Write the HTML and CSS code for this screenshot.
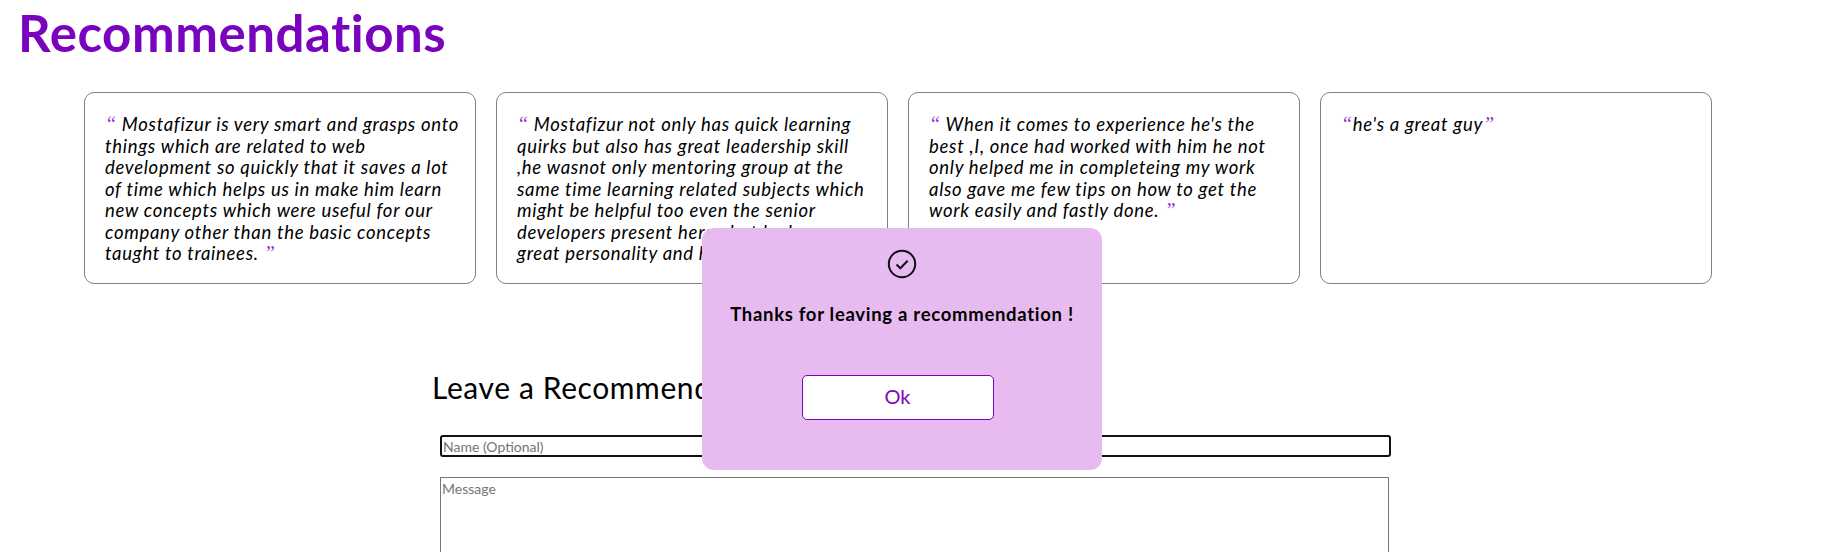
FILE: index.html
```html
<!DOCTYPE html>
<html lang="en">
<head>
<meta charset="utf-8">
<title>Recommendations</title>
<link rel="stylesheet" href="styles.css">
</head>
<body>
<section class="recs">
  <h1 class="title">Recommendations</h1>
  <div class="cards">
    <article class="card"><p class="quote"><span class="q">“</span> Mostafizur is very smart and grasps onto<br>things which are related to web<br>development so quickly that it saves a lot<br>of time which helps us in make him learn<br>new concepts which were useful for our<br>company other than the basic concepts<br>taught to trainees. <span class="q">”</span></p></article>
    <article class="card"><p class="quote"><span class="q">“</span> Mostafizur not only has quick learning<br>quirks but also has great leadership skill<br>,he wasnot only mentoring group at the<br>same time learning related subjects which<br>might be helpful too even the senior<br>developers present here ..but he has a<br>great personality and humble too. <span class="q">”</span></p></article>
    <article class="card"><p class="quote"><span class="q">“</span> When it comes to experience he's the<br>best ,I, once had worked with him he not<br>only helped me in completeing my work<br>also gave me few tips on how to get the<br>work easily and fastly done. <span class="q">”</span></p></article>
    <article class="card"><p class="quote"><span class="q">“</span>he's a great guy<span class="q">”</span></p></article>
  </div>
  <div class="form">
    <h2 class="form-title">Leave a Recommendation</h2>
    <input class="name" type="text" placeholder="Name (Optional)">
    <textarea class="message" placeholder="Message"></textarea>
  </div>
</section>
<div class="modal">
  <svg class="icon" width="30" height="30" viewBox="0 0 30 30" fill="none" stroke="#111" aria-hidden="true"><circle cx="15" cy="15" r="13.2" stroke-width="2"/><path d="M9.5 15.5l3.8 3.8 7.4-7.6" stroke-width="2"/></svg>
  <p class="modal-text">Thanks for leaving a recommendation !</p>
  <button class="ok" type="button">Ok</button>
</div>
</body>
</html>
```
FILE: styles.css
```css
html, body { margin: 0; padding: 0; height: 552px; overflow: hidden; background: #fff; }
body { font-family: Lato, "Open Sans", sans-serif; color: #000; position: relative; }
.recs { display: flex; flex-direction: column; height: 552px; overflow: hidden; }
.title { margin: 0; padding: 0 0 0 18px; font-size: 51px; line-height: 66px; font-weight: 700; color: #7a04bd; letter-spacing: 0.55px; }
.cards { display: flex; gap: 20px; margin: 26px 0 0 84px; }
.card { box-sizing: border-box; width: 392px; height: 192px; border: 1px solid #808080; border-radius: 10px; padding: 21px 20px; flex: none; }
.quote { margin: 0; font-size: 18.5px; line-height: 21.5px; font-style: italic; white-space: nowrap; letter-spacing: 0.7px; }
.q { color: #8e2fd0; font-family: "Liberation Serif", serif; font-size: 20px; font-weight: 400; line-height: 1; }
.form { margin: 86px 0 0 432px; display: flex; flex-direction: column; align-items: flex-start; flex: none; }
.form-title { margin: 0; font-size: 30px; line-height: 34px; font-weight: 400; letter-spacing: 0.6px; }
.name { box-sizing: border-box; width: 951px; height: 22px; margin: 31px 0 0 8px; padding: 0 1px; border: 2px solid #111; border-radius: 3px; font: 14px Lato, sans-serif; outline: none; }
.message { box-sizing: border-box; width: 949px; height: 200px; margin: 20px 0 0 8px; padding: 2px 1px; border: 1px solid #767676; border-radius: 0; font: 14px Lato, sans-serif; resize: none; outline: none; flex: none; }
.modal { position: absolute; left: 702px; top: 228px; width: 400px; height: 242px; box-sizing: border-box; background: #e8bbf0; border-radius: 12px; display: flex; flex-direction: column; align-items: center; padding-top: 21px; }
.icon { display: block; }
.modal-text { margin: 24px 0 0; font-size: 18.5px; line-height: 22px; font-weight: 700; color: #000; white-space: nowrap; letter-spacing: 0.7px; }
.ok { box-sizing: border-box; width: 192px; height: 45px; margin: 50px 9px 0 0; padding-bottom: 4px; background: #fff; border: 1px solid #7a04bd; border-radius: 5px; color: #7a04bd; font: 400 20px Lato, sans-serif; }
```
